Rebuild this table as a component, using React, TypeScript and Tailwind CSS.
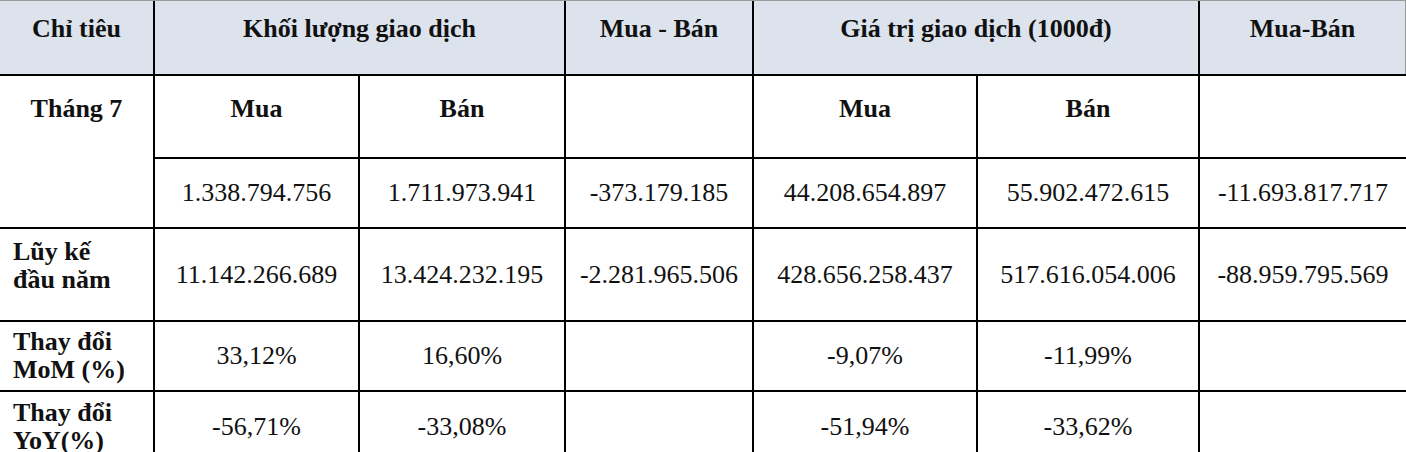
import React from 'react'

const rows = [
  {
    label: ['Lũy kế', 'đầu năm'],
    lift: true,
    values: ['11.142.266.689', '13.424.232.195', '-2.281.965.506', '428.656.258.437', '517.616.054.006', '-88.959.795.569'],
  },
  {
    label: ['Thay đổi', 'MoM (%)'],
    lift: false,
    values: ['33,12%', '16,60%', '', '-9,07%', '-11,99%', ''],
  },
  {
    label: ['Thay đổi', 'YoY(%)'],
    lift: false,
    values: ['-56,71%', '-33,08%', '', '-51,94%', '-33,62%', ''],
  },
]

const month = ['1.338.794.756', '1.711.973.941', '-373.179.185', '44.208.654.897', '55.902.472.615', '-11.693.817.717']

function Head({ children, span }: { children: React.ReactNode; span?: boolean }) {
  return (
    <div className={`bg-[#dce3ed] pt-[13px] text-center font-bold ${span ? 'col-span-2' : ''}`}>
      {children}
    </div>
  )
}

function Val({ children }: { children?: React.ReactNode }) {
  return <div className="bg-white flex items-center justify-center">{children}</div>
}

export default function App() {
  return (
    <div className="w-[1406px] h-[452px] overflow-hidden bg-white text-[26px] leading-[30px] text-[#111] font-['Liberation_Serif',serif]">
      <div className="border-t border-[#9a9a9a]">
        <div className="grid grid-cols-[153px_203px_204px_186px_222px_220px_206px] grid-rows-[73px_81px_68px_91px_68px_70px] gap-[2px] bg-black">
          {/* Header */}
          <Head>Chỉ tiêu</Head>
          <Head span>Khối lượng giao dịch</Head>
          <Head>Mua - Bán</Head>
          <Head span>Giá trị giao dịch (1000đ)</Head>
          <div className="bg-[#dce3ed] pt-[13px] text-center font-bold border-r border-[#9a9a9a]">Mua-Bán</div>

          {/* Tháng 7 */}
          <div className="row-span-2 bg-white pt-[18px] text-center font-bold">Tháng 7</div>
          <div className="bg-white pt-[18px] text-center font-bold">Mua</div>
          <div className="bg-white pt-[18px] text-center font-bold">Bán</div>
          <div className="bg-white" />
          <div className="bg-white pt-[18px] text-center font-bold">Mua</div>
          <div className="bg-white pt-[18px] text-center font-bold">Bán</div>
          <div className="bg-white" />

          {month.map((v, i) => (
            <Val key={i}>{v}</Val>
          ))}

          {rows.map((r) => (
            <React.Fragment key={r.label.join()}>
              <div className={`bg-white flex flex-col justify-center pl-[13px] font-bold leading-[28px] ${r.lift ? 'pb-[18px]' : ''}`}>
                <span>{r.label[0]}</span>
                <span>{r.label[1]}</span>
              </div>
              {r.values.map((v, i) => (
                <Val key={i}>{v}</Val>
              ))}
            </React.Fragment>
          ))}
        </div>
      </div>
    </div>
  )
}
